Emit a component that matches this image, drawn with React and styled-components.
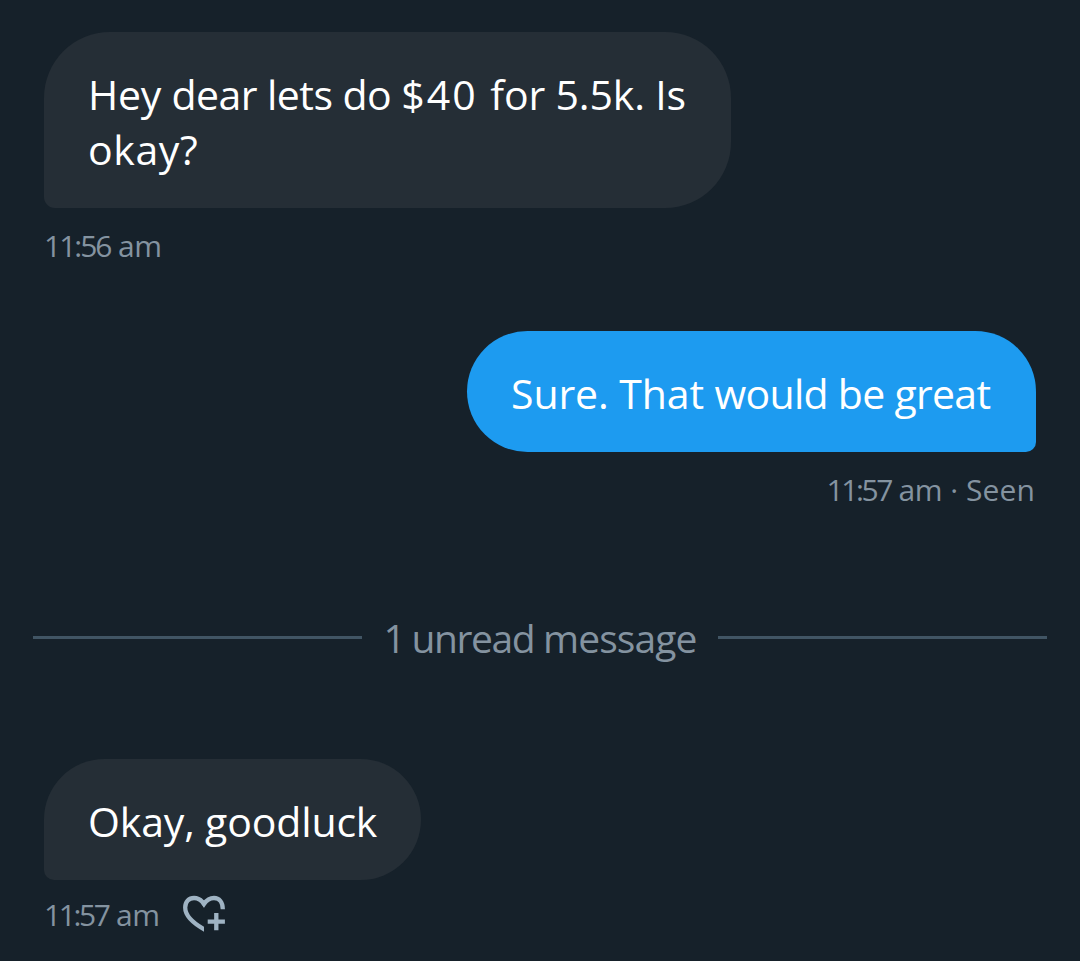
import React from "react";
import styled, { createGlobalStyle } from "styled-components";

const GlobalStyle = createGlobalStyle`
  body {
    margin: 0;
    background: #16212a;
    font-family: "Open Sans", "Noto Sans", sans-serif;
  }
`;

const Conversation = styled.main`
  box-sizing: border-box;
  height: 961px;
  padding-top: 32px;
  display: flex;
  flex-direction: column;
  overflow: hidden;
`;

const Message = styled.section`
  display: flex;
  flex-direction: column;
  align-items: ${(p) => (p.$sent ? "flex-end" : "flex-start")};
  padding: 0 44px;
`;

const Bubble = styled.div`
  box-sizing: border-box;
  width: ${(p) => p.$width}px;
  padding: 35px 0 31px 44px;
  border-radius: ${(p) => (p.$sent ? "66px 66px 11px 66px" : "66px 66px 66px 11px")};
  background: ${(p) => (p.$sent ? "#1d9bf0" : "#252e36")};
  color: #fff;
  font-size: 41px;
  line-height: 55px;
  white-space: nowrap;
`;

const Line = styled.div`
  white-space: pre;
`;

const Run = styled.span`
  letter-spacing: ${(p) => p.$tracking}px;
`;

const Meta = styled.div`
  display: flex;
  align-items: center;
  height: 44px;
  margin-top: ${(p) => p.$gap}px;
  padding-right: 1px;
  color: #8493a0;
  font-size: 30px;
  line-height: 44px;
  white-space: pre;
`;

const Divider = styled.div`
  display: flex;
  align-items: center;
  justify-content: space-between;
  height: 60px;
  margin: 96px 33px 91px;
`;

const Rule = styled.span`
  width: 329px;
  height: 3px;
  margin-bottom: 2px;
  background: #415564;
`;

const DividerLabel = styled.span`
  color: #8493a0;
  font-size: 39px;
  line-height: 60px;
  white-space: pre;
`;

const ReactButton = styled.button`
  display: flex;
  margin: 0 0 3px auto;
  padding: 0;
  border: 0;
  background: none;
  color: #9fb3c3;
`;

const LastMeta = styled(Meta)`
  box-sizing: border-box;
  width: 183px;
`;

const Spacer = styled.div`
  height: ${(p) => p.$size}px;
  flex: none;
`;

function HeartPlus() {
  return (
    <svg width="44" height="40" viewBox="0 0 44 40" fill="none" stroke="currentColor" strokeWidth="4.3">
      <clipPath id="heart-left">
        <rect x="0" y="0" width="22" height="40" />
      </clipPath>
      <path
        clipPath="url(#heart-left)"
        d="M25 36.800C11 29.500 3.200 21.500 3.200 13.500C3.200 7.500 7 4 12 4C16.500 4 19.500 6.300 22 10L24 7"
      />
      <path d="M21 8.600L22 10C24.500 6.300 27.500 4 32 4C37 4 40.800 8 40.800 15.300" />
      <path d="M34.300 19V36.200M25.700 27.600H42.900" />
    </svg>
  );
}

function Time({ value, tracking }) {
  return (
    <>
      <Run $tracking={tracking}>{value}</Run>
      <Run $tracking={-0.3}> am</Run>
    </>
  );
}

export default function App() {
  return (
    <>
      <GlobalStyle />
      <Conversation>
        <Message>
          <Bubble $width={687}>
            <Line>
              <Run $tracking={-0.25}>Hey </Run>
              <Run $tracking={-0.54}>dear lets do </Run>
              <Run $tracking={2}>$40 </Run>
              <Run $tracking={-0.15}>for 5.5k. Is</Run>
            </Line>
            <Line>
              <Run $tracking={0.6}>okay?</Run>
            </Line>
          </Bubble>
          <Meta $gap={16}>
            <Time value="11:56" tracking={-2} />
          </Meta>
        </Message>
        <Spacer $size={63} />
        <Message $sent>
          <Bubble $sent $width={569}>
            <Line>
              <Run $tracking={-0.1}>Sure. That </Run>
              <Run $tracking={-0.72}>would be great</Run>
            </Line>
          </Bubble>
          <Meta $gap={16}>
            <Time value="11:57" tracking={-2.4} />
            <Run $tracking={0.1}> · Seen</Run>
          </Meta>
        </Message>
        <Divider>
          <Rule />
          <DividerLabel>
            <Run $tracking={-2.2}>1 </Run>
            <Run $tracking={-1.4}>unread </Run>
            <Run $tracking={-0.9}>message</Run>
          </DividerLabel>
          <Rule />
        </Divider>
        <Message>
          <Bubble $width={377}>
            <Line>
              <Run $tracking={-0.15}>Okay, goodluck</Run>
            </Line>
          </Bubble>
          <LastMeta $gap={13}>
            <Time value="11:57" tracking={-2.4} />
            <ReactButton aria-label="Add reaction">
              <HeartPlus />
            </ReactButton>
          </LastMeta>
        </Message>
      </Conversation>
    </>
  );
}
